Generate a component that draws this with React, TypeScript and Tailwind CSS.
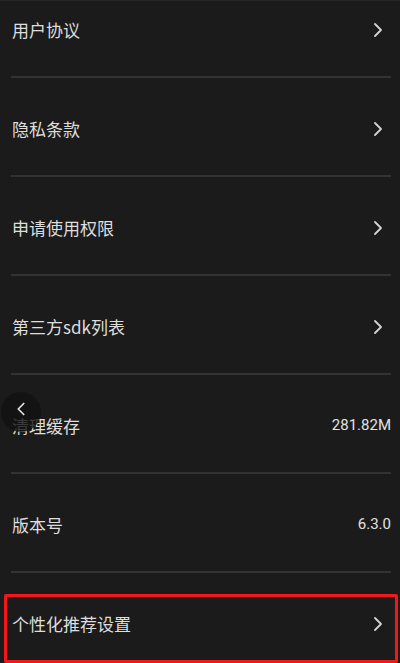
import { ChevronRight, ChevronLeft } from 'lucide-react';

interface SettingItem {
  label: string;
  value?: string;
}

const items: SettingItem[] = [
  { label: '用户协议' },
  { label: '隐私条款' },
  { label: '申请使用权限' },
  { label: '第三方sdk列表' },
  { label: '清理缓存', value: '281.82M' },
  { label: '版本号', value: '6.3.0' },
  { label: '个性化推荐设置' },
];

function SettingRow({ item }: { item: SettingItem }) {
  return (
    <div className="h-[99px] shrink-0 pl-[11px] pr-[9px]">
      <div className="h-full flex items-center justify-between border-b-2 border-[#333333] pt-[4px] pl-[1px]">
        <span className="text-[17px] text-[#dedede]">{item.label}</span>
        {item.value ? (
          <span className="text-[15px] text-[#e2e2e2] font-['Roboto',sans-serif]">
            {item.value}
          </span>
        ) : (
          <ChevronRight className="w-[24px] h-[24px] mr-[1px] text-[#d4d4d4]" strokeWidth={1.8} />
        )}
      </div>
    </div>
  );
}

export default function App() {
  return (
    <div
      className="relative w-[400px] h-[663px] overflow-hidden bg-[#1b1b1b] border-t border-[#262626]"
      style={{ fontFamily: '"Noto Sans CJK SC", "Noto Sans", sans-serif' }}
    >
      <div className="flex flex-col -mt-[22px]">
        {items.map((item) => (
          <SettingRow key={item.label} item={item} />
        ))}
      </div>

      {/* back button overlay */}
      <div className="absolute left-[1px] top-[391px] w-[40px] h-[40px] rounded-full bg-[#111111]/80 flex items-center justify-center">
        <ChevronLeft className="w-[22px] h-[22px] text-[#e6e6e6] -mt-[6px]" strokeWidth={1.8} />
      </div>

      {/* highlight box */}
      <div className="absolute left-[4px] top-[593px] w-[394px] h-[69px] border-[3px] border-[#f2181a] rounded-[2px]" />
    </div>
  );
}
